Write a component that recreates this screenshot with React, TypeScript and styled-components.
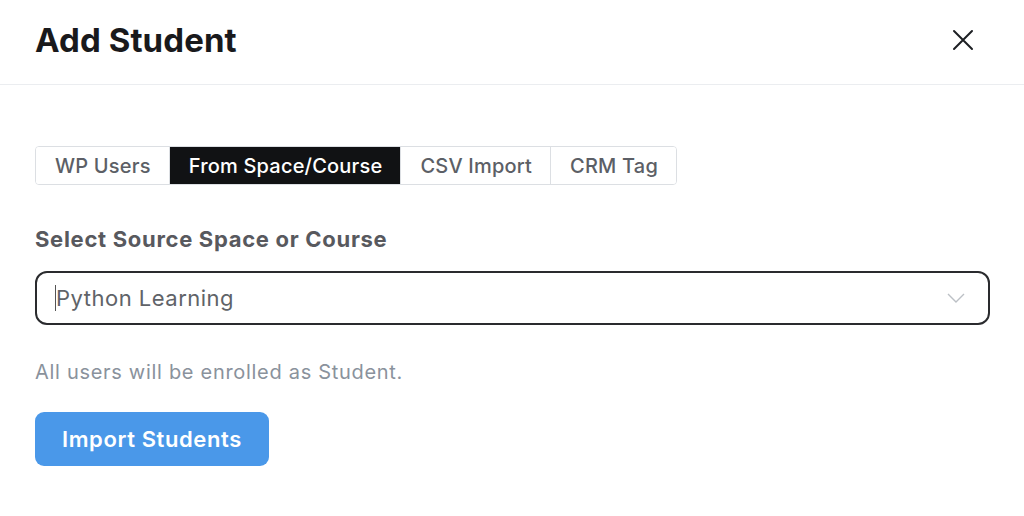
import React from 'react';
import styled, { createGlobalStyle } from 'styled-components';

const GlobalStyle = createGlobalStyle`
    html, body {
        margin: 0;
        padding: 0;
        background: #ffffff;
        font-family: "Inter", "Liberation Sans", sans-serif;
    }
`;

const tabs = ['WP Users', 'From Space/Course', 'CSV Import', 'CRM Tag'];

export default function App() {
    return (
        <>
            <GlobalStyle />
            <Dialog>
                <Header>
                    <Title>Add Student</Title>
                    <CloseButton aria-label="Close">
                        <svg width="22" height="22" viewBox="0 0 22 22" fill="none" stroke="#1d1f23" strokeWidth="2" strokeLinecap="round">
                            <path d="M2 2L20 20M20 2L2 20" />
                        </svg>
                    </CloseButton>
                </Header>
                <Body>
                    <TabGroup>
                        {tabs.map((t, i) => (
                            <Tab key={t} active={i === 1}>{t}</Tab>
                        ))}
                    </TabGroup>
                    <Label>Select Source Space or Course</Label>
                    <Select>
                        <SelectValue>Python Learning</SelectValue>
                        <svg width="20" height="12" viewBox="0 0 20 12" fill="none" stroke="#bcc0c5" strokeWidth="1.4">
                            <path d="M2 2L10 10L18 2" />
                        </svg>
                    </Select>
                    <Hint>All users will be enrolled as Student.</Hint>
                    <PrimaryButton>Import Students</PrimaryButton>
                </Body>
            </Dialog>
        </>
    );
}

const Dialog = styled.div`
    width: 1024px;
    height: 516px;
    background: #fff;
    overflow: hidden;
`;

const Header = styled.header`
    height: 85px;
    box-sizing: border-box;
    border-bottom: 1px solid #ebedf0;
    display: flex;
    align-items: center;
    justify-content: space-between;
    padding: 0 50px 0 35px;
`;

const Title = styled.h1`
    margin: 0;
    font-size: 33px;
    font-weight: 700;
    color: #19191c;
    letter-spacing: 0.1px;
    padding-bottom: 4px;
`;

const CloseButton = styled.button`
    border: none;
    background: none;
    padding: 0;
    display: flex;
    margin-bottom: 5px;
`;

const Body = styled.div`
    padding: 61px 34px 0 35px;
    display: flex;
    flex-direction: column;
    align-items: flex-start;
`;

const TabGroup = styled.div`
    display: flex;
    border: 1px solid #dcdfe3;
    border-radius: 4px;
    overflow: hidden;
`;

const Tab = styled.div<{ active?: boolean }>`
    height: 37px;
    padding: 0 18px 0 19px;
    display: flex;
    align-items: center;
    font-size: 20px;
    font-weight: 500;
    letter-spacing: 0.2px;
    color: ${p => (p.active ? '#ffffff' : '#5c5f66')};
    background: ${p => (p.active ? '#111214' : '#ffffff')};
    & + & {
        border-left: 1px solid #dcdfe3;
    }
`;

const Label = styled.div`
    margin-top: 41px;
    font-size: 22px;
    font-weight: 700;
    letter-spacing: 0.7px;
    color: #58595e;
`;

const Select = styled.div`
    margin-top: 19px;
    align-self: stretch;
    height: 54px;
    box-sizing: border-box;
    border: 2px solid #2a2b2e;
    border-radius: 12px;
    display: flex;
    align-items: center;
    justify-content: space-between;
    padding: 0 22px 0 18px;
`;

const SelectValue = styled.span`
    font-size: 22px;
    letter-spacing: 0.5px;
    color: #606368;
    border-left: 1.5px solid #555;
    line-height: 26px;
`;

const Hint = styled.p`
    margin: 35px 0 0;
    font-size: 20px;
    letter-spacing: 0.7px;
    color: #8a929c;
`;

const PrimaryButton = styled.button`
    margin-top: 28px;
    height: 54px;
    padding: 0 27px;
    border: none;
    border-radius: 9px;
    background: #4a98e9;
    color: #fff;
    font-family: inherit;
    font-size: 22px;
    font-weight: 600;
    letter-spacing: 0.6px;
`;
